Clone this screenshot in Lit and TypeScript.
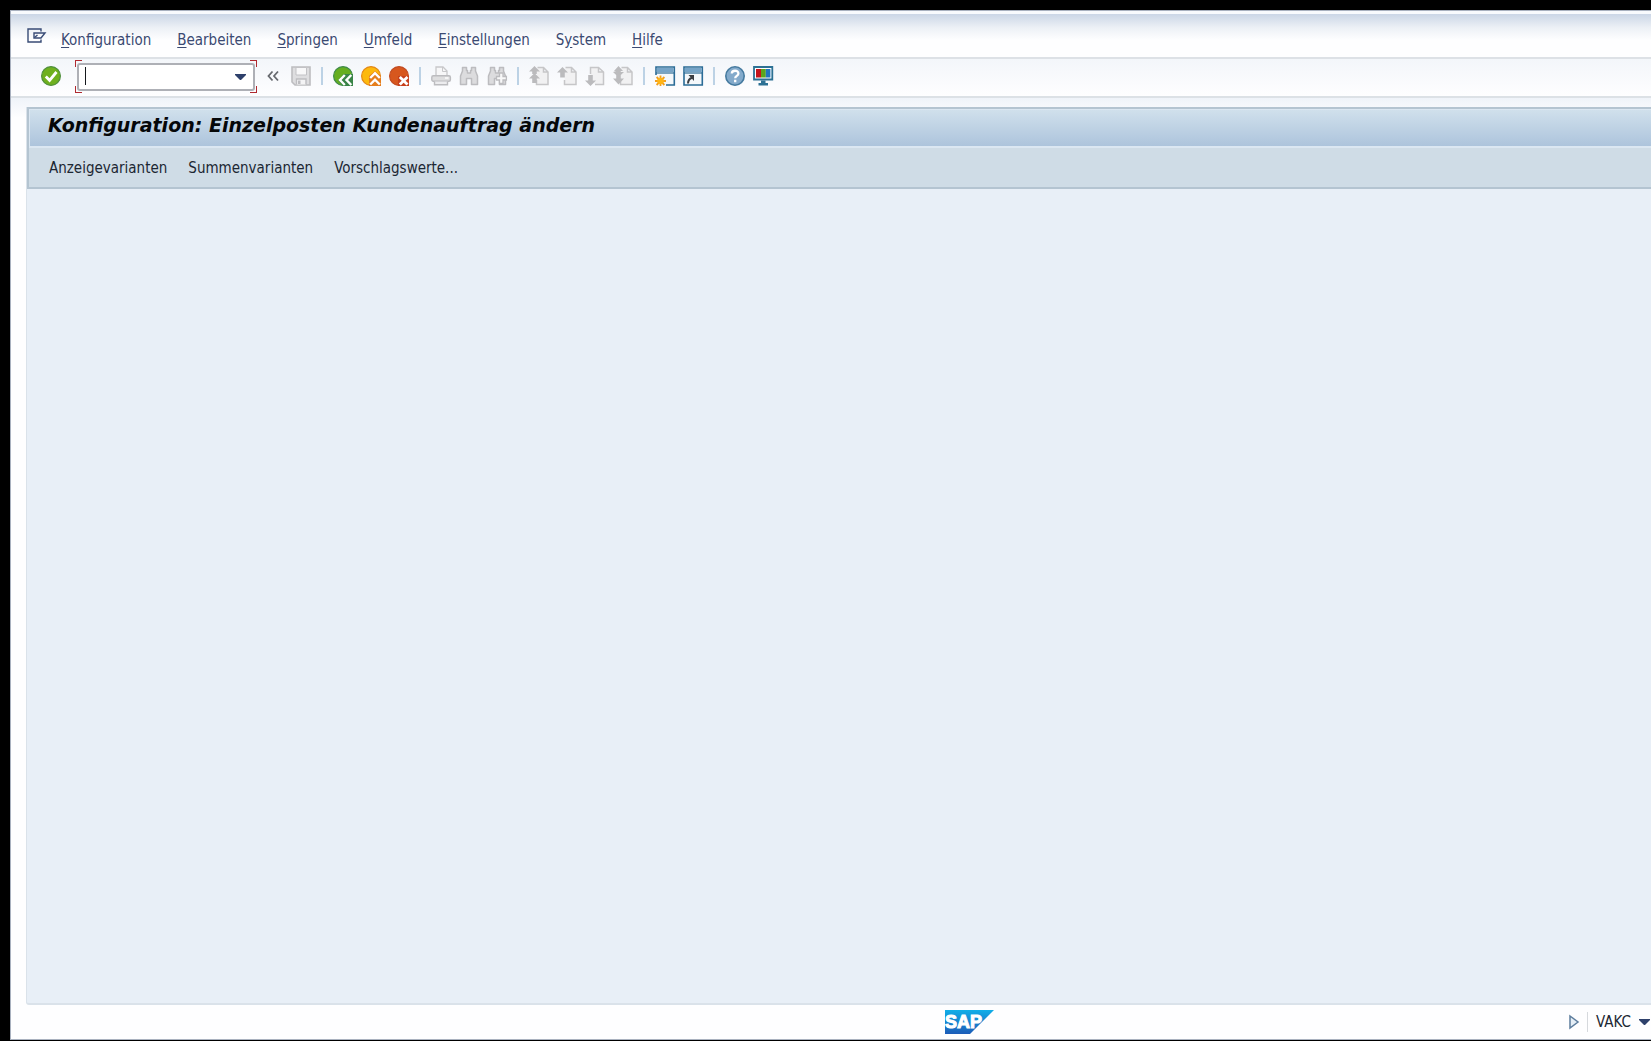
import { LitElement, html, css, svg } from "lit";
import { customElement } from "lit/decorators.js";

interface MenuEntry {
  before: string;
  key: string;
  after: string;
}

const menu: MenuEntry[] = [
  { before: "", key: "K", after: "onfiguration" },
  { before: "", key: "B", after: "earbeiten" },
  { before: "", key: "S", after: "pringen" },
  { before: "", key: "U", after: "mfeld" },
  { before: "", key: "E", after: "instellungen" },
  { before: "S", key: "y", after: "stem" },
  { before: "", key: "H", after: "ilfe" },
];

const functions = ["Anzeigevarianten", "Summenvarianten", "Vorschlagswerte..."];

const page = svg`<path d="M8.500 1.500H14.500L19 6V18.500H7.500V14M14.500 1.500V6H19" fill="#f1f1f2" stroke="#c6c6c8" stroke-width="1.500"/>`;
const lens = svg`<path d="M3.500 1.500H7.500V4.500H8.500V7H11.500V4.500H12.500V1.500H16.500V5L18.500 10V18.500H12.500V12.500H7.500V18.500H1.500V10L3.500 5Z" fill="#dcdcde" stroke="#bcbcbf" stroke-width="1.500" stroke-linejoin="round"/>`;

const icons = {
  check: svg`<circle cx="10" cy="10" r="9.400" fill="#6fb01e" stroke="#4f8f3d" stroke-width="1.200"/><path d="M4.800 10.500L8.600 14.300L15.500 6" fill="none" stroke="#fff" stroke-width="2.800"/>`,
  save: svg`<path d="M1 1H19V19H4L1 16Z" fill="#dedee0" stroke="#bdbdc0" stroke-width="1.600"/><path d="M5 1.500H15.500V9H5Z" fill="#f8f8f9" stroke="#c2c2c5"/><path d="M5.500 18.500V13H15V18.500" fill="#f4f4f5" stroke="#bdbdc0" stroke-width="1.400"/><path d="M7 14.500H9.500V18H7Z" fill="#bdbdc0"/>`,
  back: svg`<circle cx="10" cy="10" r="9.400" fill="#66ae20" stroke="#3f8a4c" stroke-width="1.200"/><path d="M5 14.500L10.500 8H20V20H10Z" fill="#398447"/><path d="M11.800 9L7 14L11.800 19M18.300 9L13.500 14L18.300 19" fill="none" stroke="#fff" stroke-width="2.400"/>`,
  exit: svg`<circle cx="10" cy="10" r="9.400" fill="#fdb90d" stroke="#e38818" stroke-width="1.200"/><path d="M8 10L14 5L20 10V20H8Z" fill="#e57e1d"/><path d="M9.200 12L14 7.200L18.800 12M9.200 18.500L14 13.700L18.800 18.500" fill="none" stroke="#fff" stroke-width="2.400"/>`,
  cancel: svg`<circle cx="10" cy="10" r="9.400" fill="#d7571e" stroke="#c14b22" stroke-width="1.200"/><path d="M9 10H20V20H9Z" fill="#c6401c"/><path d="M10.800 11L18.500 18.500M18.500 11L10.800 18.500" stroke="#fff" stroke-width="2.800"/>`,
  print: svg`<path d="M5 10V1H12L16 5V10" fill="#f7f7f8" stroke="#c8c8ca" stroke-width="1.300"/><path d="M11.500 1V5.500H16" fill="none" stroke="#c8c8ca"/><rect x=".8" y="9.800" width="18.600" height="5.400" rx="1.500" fill="#dededf" stroke="#bcbcbf" stroke-width="1.400"/><path d="M14 12H17.500" stroke="#fff" stroke-width="1.400"/><path d="M3.500 15.500V18.700H16.500V15.500" fill="#ececee" stroke="#bcbcbf" stroke-width="1.400"/>`,
  find: lens,
  findNext: svg`${lens}<path d="M12.500 7H16V10.500H19.400V14H16V17.500H12.500V14H9.500V10.500H12.500Z" fill="#f8f8f8" stroke="#bcbcbf" stroke-width="1.300"/>`,
  first: svg`${page}<path d="M5.500 0L11 5.500H7.800V8H3.200V5.500H0Z M5.500 7L11 12.500H7.800V17H3.200V12.500H0Z" fill="#bbbbbd"/>`,
  previous: svg`${page}<path d="M5.500 1L11 6.500H7.800V11.500H3.200V6.500H0Z" fill="#bbbbbd"/>`,
  next: svg`<path d="M5.500 8V1.500H13.500L18.500 6V18.500H10M13.500 1.500V6H18.500" fill="#f1f1f2" stroke="#c6c6c8" stroke-width="1.500"/><path d="M5.500 20L11 14.500H7.800V9H3.200V14.500H0Z" fill="#bbbbbd"/>`,
  last: svg`${page}<path d="M5.500 0L10 5H7.800V6H11L7.800 9V12.500H11L5.500 18.500L0 12.500H3.200V9L0 6L3.200 5H1Z" fill="#bbbbbd"/>`,
  session: svg`<path d="M1 9V1H19.300V19H11" fill="#f4f8fb" stroke="#2b6c97" stroke-width="1.600"/><path d="M1.800 2H18.500V6H1.800Z" fill="#76a4c7"/><path d="M1 7H19" stroke="#2b6c97" stroke-width="1.200"/><path d="M5.500 9.500V20M0 15H11M1.600 11L9.400 19M9.400 11L1.600 19" stroke="#f4a01c" stroke-width="1.800"/><circle cx="5.500" cy="15" r="3.300" fill="#ffb516"/>`,
  shortcut: svg`<path d="M1 1H19.300V19H1Z" fill="#f4f8fb" stroke="#2b6c97" stroke-width="1.600"/><path d="M1.800 2H18.500V6H1.800Z" fill="#76a4c7"/><path d="M1 7H19" stroke="#2b6c97" stroke-width="1.200"/><path d="M5 17.500C5 14.500 6.500 12.800 9 11.800" fill="none" stroke="#3a3d42" stroke-width="2"/><path d="M5.500 9H11V15Z" fill="#3a3d42"/>`,
  monitor: svg`<path d="M1 1H19.300V13.500H1Z" fill="#fff" stroke="#2c7194" stroke-width="1.800"/><path d="M3 3H8V11.500H3Z" fill="#c5141b"/><path d="M8 3H12.800V11.500H8Z" fill="#5ba51c"/><path d="M12.800 3H17.400V11.500H12.800Z" fill="#2274bd"/><path d="M8 14.500H12.500V17H15V19.500H5.500V17H8Z" fill="#2c7194"/>`,
  help: svg`<circle cx="10" cy="10" r="9.200" fill="#83aacb" stroke="#457a9f" stroke-width="1.600"/><path d="M6.800 7.600C6.800 3.800 13.400 3.800 13.400 7.500C13.400 10 10.200 9.800 10.200 12.300M10.200 13.800V16.200" fill="none" stroke="#fff" stroke-width="2.300"/>`,
};

interface Tool {
  icon: keyof typeof icons;
  label: string;
  disabled?: boolean;
}

const groups: Tool[][] = [
  [
    { icon: "back", label: "Zurück" },
    { icon: "exit", label: "Beenden" },
    { icon: "cancel", label: "Abbrechen" },
  ],
  [
    { icon: "print", label: "Drucken", disabled: true },
    { icon: "find", label: "Suchen", disabled: true },
    { icon: "findNext", label: "Weiter suchen", disabled: true },
  ],
  [
    { icon: "first", label: "Erste Seite", disabled: true },
    { icon: "previous", label: "Vorige Seite", disabled: true },
    { icon: "next", label: "Nächste Seite", disabled: true },
    { icon: "last", label: "Letzte Seite", disabled: true },
  ],
  [
    { icon: "session", label: "Neuer Modus" },
    { icon: "shortcut", label: "Verknüpfung erstellen" },
  ],
  [
    { icon: "help", label: "Hilfe" },
    { icon: "monitor", label: "Lokales Layout anpassen" },
  ],
];

@customElement("app-root")
export class AppRoot extends LitElement {
  static styles = css`
    :host {
      display: flex;
      flex-direction: column;
      box-sizing: border-box;
      min-height: 100vh;
      padding: 10px 0 1px 10px;
      background: #000;
      font-family: "DejaVu Sans Condensed", "DejaVu Sans", Tahoma, sans-serif;
      font-size: 15px;
      line-height: 20px;
      color: #1c2733;
    }
    * {
      box-sizing: border-box;
    }
    button {
      display: flex;
      align-items: center;
      padding: 0;
      border: 0;
      background: none;
      color: inherit;
      font: inherit;
      white-space: nowrap;
    }
    svg {
      display: block;
      overflow: visible;
    }
    .window {
      flex: 1;
      display: flex;
      flex-direction: column;
      border: 1px solid #a9b1bf;
      border-right: 0;
      background: #fefeff;
    }
    .menubar {
      display: flex;
      align-items: center;
      gap: 26px;
      height: 48px;
      padding: 8px 0 0 16px;
      border-top: 3px solid #f8fafd;
      border-bottom: 2px solid #dde1e6;
      background: linear-gradient(#cbd6e6, #edf1f6 14px, #fefeff 26px);
      color: #3b4a72;
    }
    .system {
      margin: -8px -11px 0 0;
    }
    .key {
      text-decoration: underline;
      text-underline-offset: 2px;
    }
    .toolbar {
      display: flex;
      align-items: center;
      height: 39px;
      padding: 0 0 4px 30px;
      border-bottom: 2px solid #dce1e6;
      background: linear-gradient(#f3f6fa, #fefeff);
    }
    .command {
      position: relative;
      display: flex;
      align-items: center;
      width: 178px;
      height: 28px;
      margin: 2px 12px 0 16px;
      border: 2px solid #aeb0b6;
      border-radius: 3px;
      background: #fff;
    }
    .entry {
      flex: 1;
      min-width: 0;
      height: 24px;
      padding: 0 6px;
      border: 0;
      outline: 0;
      background: none;
      font: inherit;
    }
    .caret {
      position: absolute;
      left: 6px;
      top: 2px;
      width: 1px;
      height: 18px;
      background: #15181c;
    }
    .drop {
      padding: 0 7px;
    }
    .corner {
      position: absolute;
      width: 7px;
      height: 7px;
      border: 0 solid #b02a30;
    }
    .tl {
      left: -4px;
      top: -5px;
      border-width: 1px 0 0 1px;
    }
    .tr {
      right: -4px;
      top: -5px;
      border-width: 1px 1px 0 0;
    }
    .bl {
      left: -4px;
      bottom: -4px;
      border-width: 0 0 1px 1px;
    }
    .br {
      right: -4px;
      bottom: -4px;
      border-width: 0 1px 1px 0;
    }
    .save {
      margin-left: 12px;
    }
    .group {
      display: flex;
      align-items: center;
      gap: 8px;
    }
    .group::before {
      content: "";
      width: 2px;
      height: 18px;
      margin: 0 2px 0 10px;
      background: #bcd2e5;
    }
    .workspace {
      flex: 1;
      display: flex;
      flex-direction: column;
      padding: 9px 0 0 15px;
      background: linear-gradient(#eff3f9, #fefeff 20px);
    }
    .panel {
      flex: 1;
      display: flex;
      flex-direction: column;
      border: 1px solid #dae2ea;
      border-width: 0 0 2px 1px;
      border-radius: 0 0 0 3px;
      background: #e8eff7;
    }
    .head {
      border: 2px solid #b4c4d1;
      border-right: 0;
      background: #cfdce6;
    }
    .title {
      height: 39px;
      margin: 0;
      padding: 1px 0 0 18px;
      border: 1px solid #dbe7f2;
      border-width: 1px 0 2px 1px;
      background: linear-gradient(#d0e0ec, #adc4dc);
      font-family: "DejaVu Sans", Verdana, sans-serif;
      font-size: 19px;
      font-style: italic;
      font-weight: 700;
      line-height: 28px;
      color: #050709;
    }
    .functions {
      display: flex;
      align-items: center;
      gap: 21px;
      height: 39px;
      padding-left: 20px;
    }
    .status {
      display: grid;
      grid-template-columns: 1fr auto 1fr;
      align-items: center;
      height: 34px;
      background: #fefeff;
    }
    .logo {
      grid-column: 2;
      margin-left: 277px;
    }
    .info {
      display: flex;
      align-items: center;
      justify-content: flex-end;
      gap: 8px;
      padding-right: 1px;
    }
    .divider {
      width: 1px;
      height: 20px;
      background: #d6d9dd;
    }
    .transaction {
      gap: 8px;
    }
  `;

  private tool(t: Tool) {
    return html`<button aria-label=${t.label} ?disabled=${t.disabled}>
      <svg width="20" height="20" viewBox="0 0 20 20">${icons[t.icon]}</svg>
    </button>`;
  }

  render() {
    return html`
      <div class="window">
        <nav class="menubar">
          <button class="system" aria-label="Systemmenü">
            <svg width="19" height="15" viewBox="0 0 19 15" fill="none" stroke="#384b76" stroke-width="1.400">
              <path d="M14 3.500V1H1V14H14V11.500M7 5H18L14 10H7Z" />
              <path d="M7.500 9.500L10.500 7" />
            </svg>
          </button>
          ${menu.map(
            (m) => html`<button><span>${m.before}<span class="key">${m.key}</span>${m.after}</span></button>`,
          )}
        </nav>
        <div class="toolbar">
          ${this.tool({ icon: "check", label: "Weiter" })}
          <div class="command">
            <input class="entry" type="text" aria-label="Transaktionscode" />
            <span class="caret"></span>
            <button class="drop" aria-label="Verlauf">
              <svg width="11" height="6" viewBox="0 0 11 6"><path d="M0 0H11V1L6 6H5L0 1Z" fill="#2e406b" /></svg>
            </button>
            <span class="corner tl"></span><span class="corner tr"></span>
            <span class="corner bl"></span><span class="corner br"></span>
          </div>
          <button aria-label="Befehlsfeld ausblenden">
            <svg width="12" height="10" viewBox="0 0 12 10" fill="none" stroke="#66696e" stroke-width="1.800">
              <path d="M5.500 .5L1.500 5L5.500 9.500M11 .5L7 5L11 9.500" />
            </svg>
          </button>
          <div class="save">${this.tool({ icon: "save", label: "Sichern", disabled: true })}</div>
          ${groups.map((g) => html`<div class="group">${g.map((t) => this.tool(t))}</div>`)}
        </div>
        <main class="workspace">
          <div class="panel">
            <header class="head">
              <h1 class="title">Konfiguration: Einzelposten Kundenauftrag ändern</h1>
              <div class="functions">${functions.map((f) => html`<button>${f}</button>`)}</div>
            </header>
          </div>
        </main>
        <footer class="status">
          <svg class="logo" width="49" height="24" viewBox="0 0 49 24" role="img" aria-label="SAP">
            <defs>
              <linearGradient id="blue" x2="0" y2="1">
                <stop offset="0" stop-color="#10aee8" />
                <stop offset="1" stop-color="#1c5cb8" />
              </linearGradient>
            </defs>
            <path d="M0 0H49L25 24H0Z" fill="url(#blue)" />
            <text x="0" y="18" font-family="Liberation Sans" font-size="18" font-weight="700" fill="#fff" stroke="#fff" stroke-width="1">SAP</text>
          </svg>
          <div class="info">
            <button aria-label="Statusfeld einblenden">
              <svg width="10" height="14" viewBox="0 0 10 14"><path d="M1 1L9 7L1 13Z" fill="#e5eef6" stroke="#5d7d9d" stroke-width="1.500" /></svg>
            </button>
            <span class="divider"></span>
            <button class="transaction">
              VAKC
              <svg width="11" height="6" viewBox="0 0 11 6"><path d="M0 0H11V1L6 6H5L0 1Z" fill="#2e406b" /></svg>
            </button>
          </div>
        </footer>
      </div>
    `;
  }
}
